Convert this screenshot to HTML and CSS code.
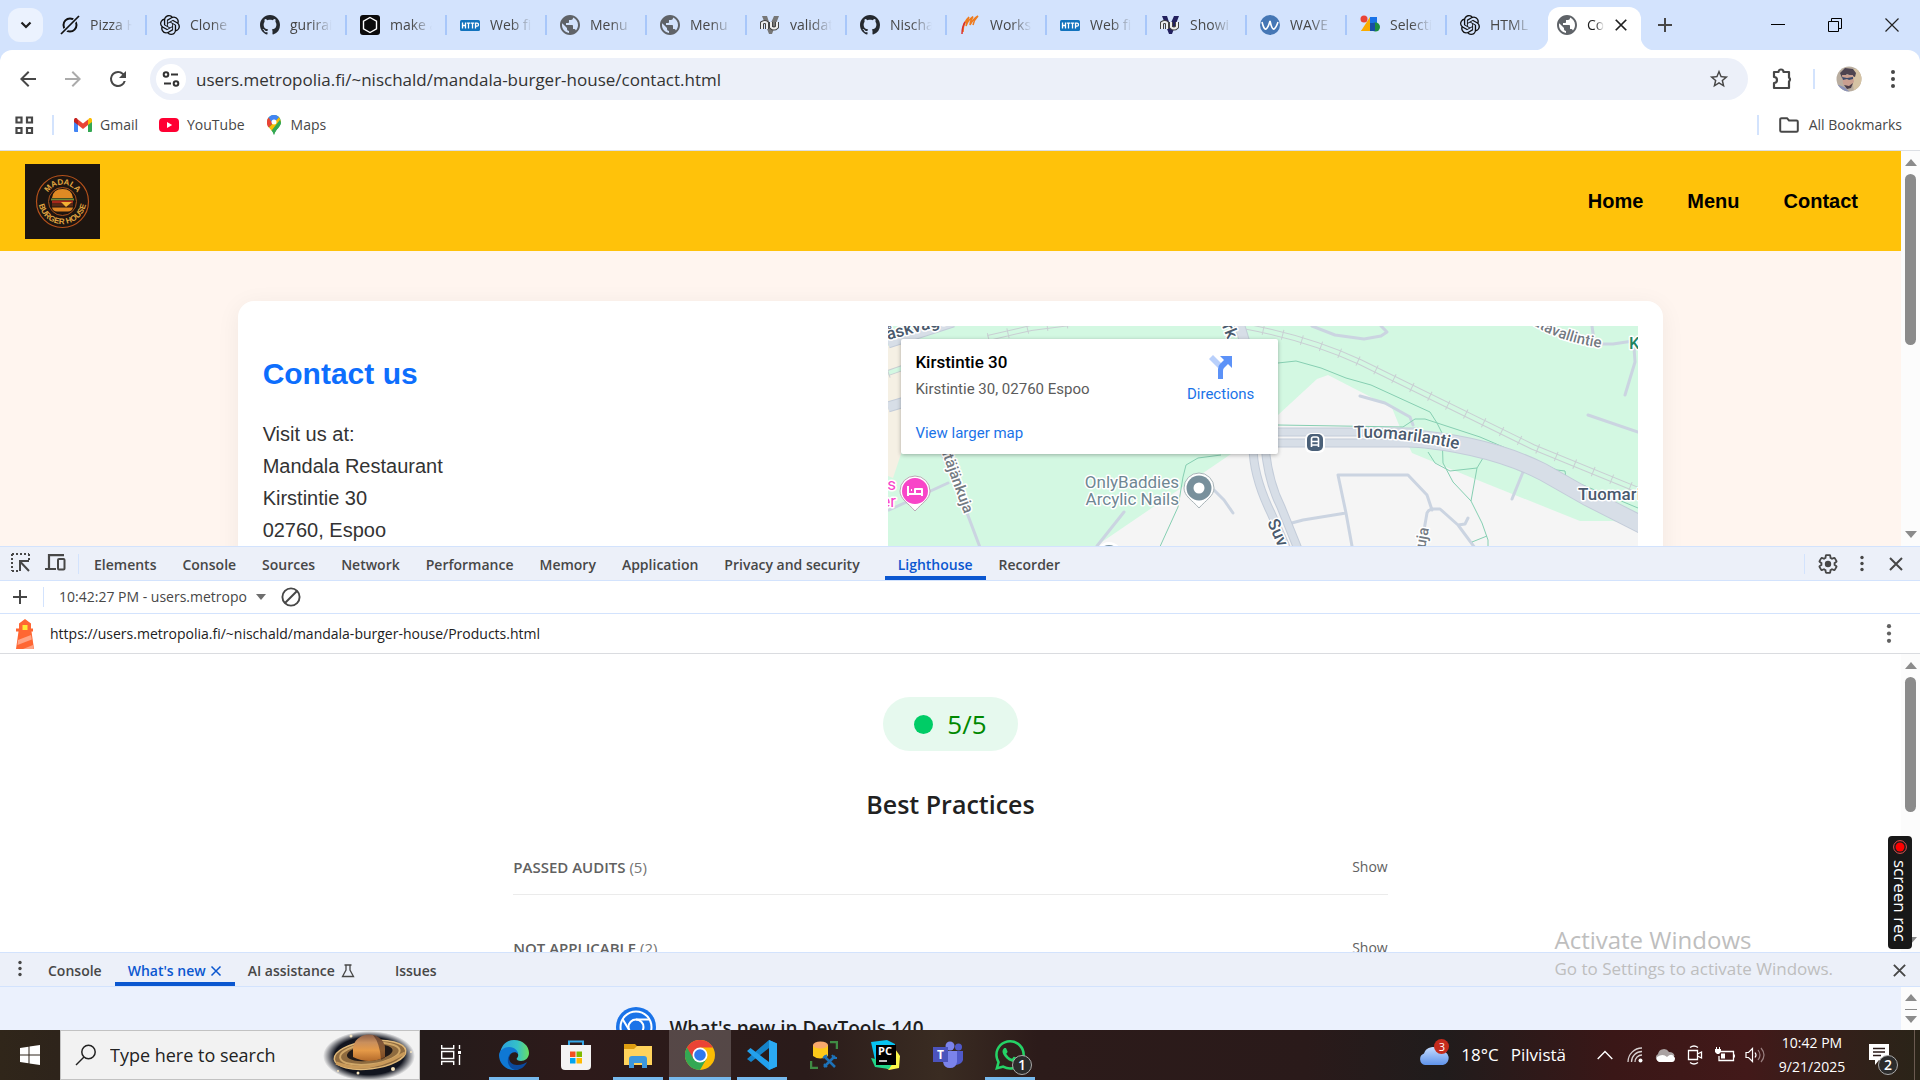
FILE: index.html
```html
<!DOCTYPE html>
<html lang="en">
<head>
<meta charset="utf-8">
<title>Contact</title>
<link rel="stylesheet" href="styles.css">
</head>
<body>
<svg class="sprite" aria-hidden="true">
  <symbol id="i-globe" viewBox="2 2 20 20"><path fill="#5f6368" d="M12 2C6.48 2 2 6.48 2 12s4.480 10 10 10 10-4.480 10-10S17.520 2 12 2zm-1 17.930c-3.950-.49-7-3.850-7-7.930 0-.62.08-1.210.21-1.790L9 15v1c0 1.100.9 2 2 2v1.930zm6.900-2.540c-.26-.81-1-1.390-1.900-1.390h-1v-3c0-.55-.45-1-1-1H8v-2h2c.55 0 1-.45 1-1V7h2c1.100 0 2-.9 2-2v-.41c2.930 1.190 5 4.060 5 7.410 0 2.080-.8 3.970-2.100 5.390z"/></symbol>
  <symbol id="i-github" viewBox="0 0 16 16"><path fill="#24292f" d="M8 0C3.58 0 0 3.58 0 8c0 3.54 2.29 6.53 5.47 7.59.4.07.55-.17.55-.38 0-.19-.01-.82-.01-1.49-2.01.37-2.53-.49-2.69-.94-.09-.23-.48-.94-.82-1.13-.28-.15-.68-.52-.01-.53.63-.01 1.08.58 1.23.82.72 1.21 1.87.87 2.33.66.07-.52.28-.87.51-1.07-1.78-.2-3.64-.89-3.64-3.95 0-.87.31-1.59.82-2.15-.08-.2-.36-1.02.08-2.12 0 0 .67-.21 2.2.82.64-.18 1.32-.27 2-.27s1.36.09 2 .27c1.53-1.04 2.2-.82 2.2-.82.44 1.1.16 1.92.08 2.12.51.56.82 1.27.82 2.15 0 3.07-1.87 3.75-3.65 3.95.29.25.54.73.54 1.48 0 1.07-.01 1.93-.01 2.2 0 .21.15.46.55.38A8.01 8.01 0 0 0 16 8c0-4.42-3.58-8-8-8z"/></symbol>
  <symbol id="i-openai" viewBox="0 0 24 24"><path fill="#111" d="M22.2819 9.8211a5.9847 5.9847 0 0 0-.5157-4.9108 6.0462 6.0462 0 0 0-6.5098-2.9A6.0651 6.0651 0 0 0 4.9807 4.1818a5.9847 5.9847 0 0 0-3.9977 2.9 6.0462 6.0462 0 0 0 .7427 7.0966 5.98 5.98 0 0 0 .511 4.9107 6.051 6.051 0 0 0 6.5146 2.9001A5.9847 5.9847 0 0 0 13.2599 24a6.0557 6.0557 0 0 0 5.7718-4.2058 5.9894 5.9894 0 0 0 3.9977-2.9001 6.0557 6.0557 0 0 0-.7475-7.0729zm-9.022 12.6081a4.4755 4.4755 0 0 1-2.8764-1.0408l.1419-.0804 4.7783-2.7582a.7948.7948 0 0 0 .3927-.6813v-6.7369l2.02 1.1686a.071.071 0 0 1 .038.052v5.5826a4.504 4.504 0 0 1-4.4945 4.4944zm-9.6607-4.1254a4.4708 4.4708 0 0 1-.5346-3.0137l.142.0852 4.783 2.7582a.7712.7712 0 0 0 .7806 0l5.8428-3.3685v2.3324a.0804.0804 0 0 1-.0332.0615L9.74 19.9502a4.4992 4.4992 0 0 1-6.1408-1.6464zM2.3408 7.8956a4.485 4.485 0 0 1 2.3655-1.9728V11.6a.7664.7664 0 0 0 .3879.6765l5.8144 3.3543-2.0201 1.1685a.0757.0757 0 0 1-.071 0l-4.8303-2.7865A4.504 4.504 0 0 1 2.3408 7.872zm16.5963 3.8558L13.1038 8.364 15.1192 7.2a.0757.0757 0 0 1 .071 0l4.8303 2.7913a4.4944 4.4944 0 0 1-.6765 8.1042v-5.6772a.79.79 0 0 0-.407-.667zm2.0107-3.0231l-.142-.0852-4.7735-2.7818a.7759.7759 0 0 0-.7854 0L9.409 9.2297V6.8974a.0662.0662 0 0 1 .0284-.0615l4.8303-2.7866a4.4992 4.4992 0 0 1 6.6802 4.66zM8.3065 12.863l-2.02-1.1638a.0804.0804 0 0 1-.038-.0567V6.0742a4.4992 4.4992 0 0 1 7.3757-3.4537l-.142.0805L8.704 5.459a.7948.7948 0 0 0-.3927.6813zm1.0976-2.3654l2.602-1.4998 2.6069 1.4998v2.9994l-2.5974 1.4997-2.6067-1.4997Z"/></symbol>
  <symbol id="i-http" viewBox="0 0 20 20"><rect y="5" width="20" height="11" rx="1.500" fill="#1173bd"/><path d="M2.500 7.500v6M5.500 7.500v6M2.500 10.500h3M6.800 8.200h3.400M8.500 8v5.500M10.800 8.200h3.400M12.500 8v5.500M15.500 13.500V8.200h1.500a1.300 1.300 0 0 1 0 3h-1.500" fill="none" stroke="#fff" stroke-width="1.300"/></symbol>
  <symbol id="i-nu" viewBox="0 0 20 20"><path d="M2 1h5l3 9 4-9h5l-7 18H9z" fill="currentColor"/><path d="M2 14V8q3-2 5 0v6M11 7v5q3 3 6 0V7" fill="none" stroke="#444" stroke-width="4"/><path d="M2 14V8q3-2 5 0v6M11 7v5q3 3 6 0V7" fill="none" stroke="#eee" stroke-width="2"/></symbol>
  <symbol id="i-close" viewBox="0 0 16 16"><path d="M2 2l12 12M14 2L2 14" stroke="currentColor" stroke-width="2" fill="none"/></symbol>
  <symbol id="i-dots" viewBox="0 0 20 20"><g fill="currentColor"><circle cx="10" cy="3" r="2"/><circle cx="10" cy="10" r="2"/><circle cx="10" cy="17" r="2"/></g></symbol>
  <symbol id="i-plus" viewBox="0 0 16 16"><path d="M8 1v14M1 8h14" stroke="currentColor" stroke-width="2"/></symbol>
</svg>

<div class="shell">
<header class="browser">
  <div class="tabstrip">
    <button class="tab-search" aria-label="Search tabs"><svg width="12" height="8" viewBox="0 0 12 8"><path d="M1.500 1.500L6 6l4.500-4.500" fill="none" stroke="#1f1f1f" stroke-width="2.200"/></svg></button>
    <div class="tabs">
      <button class="tab"><svg viewBox="0 0 20 20"><circle cx="10" cy="10" r="6.500" fill="none" stroke="#111" stroke-width="2"/><path d="M1 19Q9 12 19 1" stroke="#d3e3fd" stroke-width="4"/><path d="M1 19L19 1" stroke="#111" stroke-width="1.700"/></svg><span>Pizza H</span></button>
      <button class="tab"><svg><use href="#i-openai"/></svg><span>Clone</span></button>
      <button class="tab"><svg><use href="#i-github"/></svg><span>gurirai</span></button>
      <button class="tab"><svg viewBox="0 0 20 20"><rect width="20" height="20" rx="3" fill="#0b0b0b"/><path d="M10 2.500l6.500 3.700v7.600L10 17.500l-6.500-3.700V6.200z" fill="none" stroke="#fff" stroke-width="1.400"/></svg><span>make a</span></button>
      <button class="tab"><svg><use href="#i-http"/></svg><span>Web fi</span></button>
      <button class="tab"><svg><use href="#i-globe"/></svg><span>Menu</span></button>
      <button class="tab"><svg><use href="#i-globe"/></svg><span>Menu</span></button>
      <button class="tab"><svg class="nu-gray"><use href="#i-nu"/></svg><span>validat</span></button>
      <button class="tab"><svg><use href="#i-github"/></svg><span>Nischa</span></button>
      <button class="tab"><svg viewBox="0 0 20 20"><path d="M3 17Q3 7 9 2Q6 7 6 11Q8 5 13 1.500Q10 6 10 10Q13 4 18 1Q14 5 13 10" fill="none" stroke="#ee7a1d" stroke-width="1.500"/><path d="M2 19Q2 12 5 7" fill="none" stroke="#d93030" stroke-width="1.500"/></svg><span>Works</span></button>
      <button class="tab"><svg><use href="#i-http"/></svg><span>Web fi</span></button>
      <button class="tab"><svg class="nu-navy"><use href="#i-nu"/></svg><span>Showi</span></button>
      <button class="tab"><svg viewBox="0 0 20 20"><circle cx="10" cy="10" r="10" fill="#4577b5"/><path d="M2 7q2 8 4 7t4-8q2 9 4 8t4-7" fill="none" stroke="#fff" stroke-width="1.600"/></svg><span>WAVE</span></button>
      <button class="tab"><svg viewBox="0 0 20 20"><circle cx="4" cy="4" r="3.500" fill="#ea4335"/><path d="M8 8v8H1z" fill="#fbbc04"/><path d="M1 16L10 2v14z" fill="#f9ab00"/><path d="M10 2h7v8h-7z" fill="#1a73e8"/><circle cx="15.500" cy="12" r="4.500" fill="#1e8e3e"/><path d="M10 8h5v8h-5z" fill="#174ea6"/></svg><span>Selecti</span></button>
      <button class="tab"><svg><use href="#i-openai"/></svg><span>HTML</span></button>
      <div class="tab-active"><svg class="fav"><use href="#i-globe"/></svg><span>Co</span><button aria-label="Close tab"><svg width="14" height="14"><use href="#i-close"/></svg></button></div>
      <button class="tab-new" aria-label="New tab"><svg width="16" height="16"><use href="#i-plus"/></svg></button>
    </div>
    <div class="window-controls">
      <button aria-label="Minimize"><svg width="14" height="14" viewBox="0 0 14 14"><path d="M0 6.500h14" stroke="#000"/></svg></button>
      <button aria-label="Restore"><svg width="14" height="14" viewBox="0 0 14 14"><path d="M.5 3.500h10v10H.5zM3.500 3.500v-3h10v10h-3" fill="none" stroke="#000"/></svg></button>
      <button aria-label="Close"><svg width="14" height="14" viewBox="0 0 14 14"><path d="M.5.5l13 13M13.500.5l-13 13" stroke="#222" stroke-width="1.200"/></svg></button>
    </div>
  </div>
  <div class="toolbar">
    <button class="nav-btn" aria-label="Back"><svg width="24" height="24" viewBox="0 0 24 24"><path fill="#474747" d="M20 11H7.830l5.590-5.590L12 4l-8 8 8 8 1.410-1.410L7.830 13H20z"/></svg></button>
    <button class="nav-btn" aria-label="Forward"><svg width="24" height="24" viewBox="0 0 24 24"><path fill="#ababab" d="M4 11h12.170l-5.590-5.590L12 4l8 8-8 8-1.410-1.410L16.170 13H4z"/></svg></button>
    <button class="nav-btn" aria-label="Reload"><svg width="24" height="24" viewBox="0 0 24 24"><path fill="#474747" d="M17.650 6.350A7.958 7.958 0 0 0 12 4a8 8 0 1 0 7.730 10h-2.080A6 6 0 1 1 12 6c1.660 0 3.140.69 4.220 1.780L13 11h7V4z"/></svg></button>
    <div class="omnibox">
      <button class="site-info" aria-label="View site information"><svg width="18" height="16" viewBox="0 0 18 16"><g fill="none" stroke="#333" stroke-width="2"><circle cx="4" cy="3.500" r="2.300"/><path d="M9 3.500h7M2 12.500h7"/><circle cx="14" cy="12.500" r="2.300"/></g></svg></button>
      <input class="url" aria-label="Address" value="users.metropolia.fi/~nischald/mandala-burger-house/contact.html">
      <button class="star" aria-label="Bookmark this tab"><svg width="22" height="22" viewBox="0 0 24 24"><path fill="#474747" d="M22 9.240l-7.190-.62L12 2 9.190 8.630 2 9.240l5.460 4.730L5.820 21 12 17.270 18.180 21l-1.630-7.030L22 9.240zM12 15.400l-3.760 2.270 1-4.280-3.320-2.880 4.380-.38L12 6.100l1.710 4.040 4.380.38-3.320 2.880 1 4.280L12 15.400z"/></svg></button>
    </div>
    <button class="ext" aria-label="Extensions"><svg width="22" height="22" viewBox="0 0 22 22"><path d="M3 4h4.500a2.500 2.500 0 0 1 5 0H18v5.500a2.500 2.500 0 0 1 0 4V20H3v-5a3 3 0 0 0 0-6z" fill="none" stroke="#474747" stroke-width="2.200" stroke-linejoin="round"/></svg></button>
    <i class="vsep"></i>
    <button class="avatar" aria-label="Profile"><svg width="26" height="26" viewBox="0 0 26 26"><defs><clipPath id="av"><circle cx="13" cy="13" r="12.500"/></clipPath></defs><g clip-path="url(#av)"><rect width="26" height="26" fill="#b9ad9f"/><path d="M15 3h11v23h-8z" fill="#d5c3a4"/><path d="M4 7l5-5 8 1 3 4-1 4-8-3-5 4z" fill="#4d4450"/><path d="M6 9h11l1 7-5 6-6-4z" fill="#c99f90"/><path d="M6 11l5 1 6-1v2l-4 1-2-1-4 1z" fill="#3a4a6a"/><path d="M8 19l5 1 4-3-2 5-4 1z" fill="#4b3d48"/><path d="M0 18l8 3 6 5H0z" fill="#8b93b8"/></g></svg></button>
    <button class="more" aria-label="Menu"><svg width="20" height="20"><use href="#i-dots"/></svg></button>
  </div>
  <div class="bookmarks">
    <button class="apps" aria-label="Apps"><svg width="19" height="19" viewBox="0 0 19 19"><path d="M1.500 1.500h5v5h-5zM12 1.500h5v5h-5zM1.500 12h5v5h-5zM12 12h5v5h-5z" fill="none" stroke="#474747" stroke-width="2.200"/></svg></button>
    <i class="vsep"></i>
    <a class="bm bm-gmail" href="#"><svg width="18" height="14" viewBox="0 0 18 14"><path d="M0 2v11a1 1 0 0 0 1 1h3V6z" fill="#4285f4"/><path d="M18 2v11a1 1 0 0 1-1 1h-3V6z" fill="#34a853"/><path d="M14 1.500V7l4-3V2c0-1.800-2-2.400-3-1.500z" fill="#fbbc04"/><path d="M4 7V1.500l5 4 5-4V7l-5 4z" fill="#ea4335"/><path d="M0 2v2l4 3V1.500L3 .5C2-.4 0 .2 0 2z" fill="#c5221f"/></svg>Gmail</a>
    <a class="bm bm-yt" href="#"><svg width="20" height="14" viewBox="0 0 20 14"><rect width="20" height="14" rx="4" fill="#f03"/><path d="M8 4l5.200 3L8 10z" fill="#fff"/></svg>YouTube</a>
    <a class="bm bm-maps" href="#"><svg width="14" height="20" viewBox="0 0 14 20"><path d="M7 0a7 7 0 0 1 7 7c0 5-5.500 7-7 13C5.500 14 0 12 0 7a7 7 0 0 1 7-7z" fill="#34a853"/><path d="M1.500 2.600L7 7l-5.500 5.500A8 8 0 0 1 0 7c0-1.700.6-3.200 1.500-4.400z" fill="#ea4335"/><path d="M2 12.500L12 1.900 14 7 5 16z" fill="#fbbc04"/><path d="M1.600 2.500A7 7 0 0 1 12 2L6 9z" fill="#4285f4"/><path d="M14 7c0 5-5.500 7-7 13-.4-1.800-1.300-3.200-2.400-4.500L12.800 5z" fill="#34a853"/><circle cx="7" cy="7" r="2.500" fill="#fff"/></svg>Maps</a>
    <span class="grow"></span>
    <i class="vsep"></i>
    <a class="bm bm-all" href="#"><svg width="20" height="16" viewBox="0 0 20 16"><path d="M1.200 2.500a1.300 1.300 0 0 1 1.300-1.300H8l2 2.300h7.500a1.300 1.300 0 0 1 1.300 1.300v8.700a1.300 1.300 0 0 1-1.300 1.300h-15a1.300 1.300 0 0 1-1.300-1.300z" fill="none" stroke="#474747" stroke-width="2"/></svg>All Bookmarks</a>
  </div>
</header>

<section class="viewport">
  <div class="page">
    <nav class="site-nav">
      <a class="logo" href="#" aria-label="Madala Burger House"><svg viewBox="0 0 75 75"><defs><path id="arc-top" d="M20.500 37.500a17 17 0 0 1 34 0"/><path id="arc-bottom" d="M13.500 36a24 24 0 0 0 48 0"/></defs><rect width="75" height="75" fill="#1d1510"/><circle cx="37.500" cy="37.500" r="26" fill="none" stroke="#b6521b" stroke-width="1.200"/><circle cx="37.500" cy="37.500" r="14" fill="none" stroke="#a8501c" stroke-width="1"/><text class="logo-text" text-anchor="middle"><textPath href="#arc-top" startOffset="50%">MADALA</textPath></text><text class="logo-text" text-anchor="middle"><textPath href="#arc-bottom" startOffset="50%">BURGER HOUSE</textPath></text><path d="M27 34q1-9 10.500-9T48 34z" fill="#e08a24"/><path d="M26 34.500h23v2H26z" fill="#6f8a34"/><path d="M27 36.500h21v3H27z" fill="#a5271b"/><path d="M27 39.500h21v3H27z" fill="#5a2a14"/><path d="M36 38h11l-6 5z" fill="#f2b135"/><path d="M27 43.500h21q-1 4-5 4H32q-4 0-5-4z" fill="#de8422"/></svg></a>
      <div class="site-links"><a href="#">Home</a><a href="#">Menu</a><a href="#">Contact</a></div>
    </nav>
    <main class="contact-card">
      <div class="contact-text">
        <h1>Contact us</h1>
        <p>Visit us at:<br>Mandala Restaurant<br>Kirstintie 30<br>02760, Espoo</p>
      </div>
      <div class="map">
        <svg class="map-art" viewBox="0 0 750 450" preserveAspectRatio="xMidYMin slice">
          <defs>
            <path id="p-tuo" d="M466 112Q520 110 585 127"/>
            <path id="p-tuo2" d="M690 174h120"/>
            <path id="p-vall" d="M630 -12Q665 18 730 24"/>
          </defs>
          <rect width="750" height="450" fill="#d3f8e2"/>
          <path d="M0 20L13 14V128L5 152L0 150z" fill="#f5f0e4"/>
          <path d="M343 128L390 89L429 53L440 49L504 82L511 99L524 127L582 151L692 195H725L750 200V450H0V420L208 220z" fill="#f5f5f5"/>
          <g class="rail-line"><path d="M100 12L143 2L190 -4M0 47L20 40M355 0Q420 12 472 36L645 121L750 164"/></g>
          <g class="rail-gap"><path d="M100 12L143 2L190 -4M0 47L20 40M355 0Q420 12 472 36L645 121L750 164"/></g>
          <g class="rail-tick"><path d="M100 12L143 2L190 -4M0 47L20 40M355 0Q420 12 472 36L645 121L750 164"/></g>
          <g class="minor">
            <path d="M464 220L458 187L450 149H520L539 169L544 184M400 198L415 194L458 187M535 210L539 187Q541 183 545 183H552L570 199L590 226M570 199L577 198L580 192M635 146L624 173M700 89L750 106M704 0L706 14M712 18H725L745 15M746 21L747 36L737 69M424 0L447 9L476 13L493 10L499 6L493 0M472 70L497 77L522 91L525 99M326 164L336 174L345 187M236 186L209 220M54 128L79 187L93 224M1 184L60 157"/>
          </g>
          <g class="trail">
            <path d="M390 37L408 35L433 42L458 52L483 59L542 86L549 97L554 107L555 137L565 156L583 175L594 197L600 214V230M390 99L515 101L527 93H537L592 111L669 144L677 145L678 152L750 182M540 126L547 137L562 145L589 142L595 132M589 142L583 175M584 216L599 210M333 129L310 132L298 139L295 151L290 181L270 225"/>
          </g>
          <g class="road-edge"><path d="M0 17L65 -4M0 81L20 75" stroke-width="11"/><path d="M380 106H530" stroke-width="9"/><path d="M380 117H530" stroke-width="9"/><path d="M520 112Q600 118 655 146L699 171L760 202" stroke-width="18"/><path d="M350 -6L358 20" stroke-width="11"/><path d="M365 120Q365 150 383 187L401 228M377 120Q380 155 393 181L412 228" stroke-width="9"/></g>
          <g class="road"><path d="M0 17L65 -4M0 81L20 75" stroke-width="9"/><path d="M380 106H530" stroke-width="7"/><path d="M380 117H530" stroke-width="7"/><path d="M520 112Q600 118 655 146L699 171L760 202" stroke-width="16"/><path d="M350 -6L358 20" stroke-width="9"/><path d="M365 120Q365 150 383 187L401 228M377 120Q380 155 393 181L412 228" stroke-width="7"/></g>
          <g class="label-major">
            <text><textPath href="#p-tuo">Tuomarilantie</textPath></text>
            <text><textPath href="#p-tuo2">Tuomarilantie</textPath></text>
            <text transform="translate(379 196) rotate(66)">Suvelantie</text>
            <text transform="translate(0 14) rotate(-15)">åskvägen</text>
            <text transform="translate(334 0) rotate(68)">rk</text>
          </g>
          <g class="label-minor">
            <text><textPath href="#p-vall" startOffset="8">Ratavallintie</textPath></text>
            <text transform="translate(54 127) rotate(70)">itäjänkuja</text>
            <text transform="translate(536 230) rotate(-80)">kuja</text>
          </g>
          <text class="label-green" x="741" y="23">K</text>
          <g class="label-poi"><text x="291" y="162" text-anchor="end">OnlyBaddies</text><text x="291" y="179" text-anchor="end">Arcylic Nails</text></g>
          <g class="label-hotel"><text x="8" y="164" text-anchor="end">s</text><text x="8" y="181" text-anchor="end">er</text></g>
          <path d="M296 162a15 15 0 1 1 30 0c0 8-8 12-15 20c-7-8-15-12-15-20z" fill="#fff" stroke="#a9b4b8"/><circle cx="311" cy="162" r="12.500" fill="#78909c"/><circle cx="311" cy="162" r="5.500" fill="#fff"/>
          <path d="M12 165a15 15 0 1 1 30 0c0 8-8 12-15 20c-7-8-15-12-15-20z" fill="#fff" stroke="#b9a9b4"/><circle cx="27" cy="165" r="13" fill="#f845c8"/><path d="M20 160v10M20 168h14v2M34 168v-5h-7v4M23 164h1" fill="none" stroke="#fff" stroke-width="2"/>
          <circle cx="221" cy="229" r="13" fill="#fff"/><circle cx="221" cy="230" r="11" fill="#78909c"/>
          <rect x="417" y="107" width="20" height="20" rx="6" fill="#fff"/><rect x="419" y="108" width="16" height="17" rx="5" fill="#4a6078"/><path d="M423.500 121v-8q0-2 2-2h3q2 0 2 2v8M424 115.500h6M424 119h6" fill="none" stroke="#fff" stroke-width="1.600"/>
        </svg>
        <div class="place">
          <div class="place-info"><strong>Kirstintie 30</strong><span>Kirstintie 30, 02760 Espoo</span><a href="#">View larger map</a></div>
          <a class="place-dir" href="#"><svg width="24" height="24" viewBox="0 0 24 24"><path d="M0 4l4-4 9 9-4 4z" fill="#b9d0fb"/><path d="M9 24V14q0-3 2-5l4-4-4-4h12v12l-4-4-4 4q-1 1-1 3v8z" fill="#5c92f8"/></svg>Directions</a>
        </div>
      </div>
    </main>
  </div>
  <div class="scrollbar"><i class="up"></i><i class="thumb thumb-page"></i><i class="down"></i></div>
</section>

<section class="devtools">
  <div class="dt-tabs">
    <button class="dt-inspect" aria-label="Inspect"><svg width="19" height="19" viewBox="0 0 19 19"><path d="M1 1h17M1 1v17M18 1v6M1 18h6" stroke="#474747" stroke-width="2" stroke-dasharray="2 2" fill="none"/><path d="M8 8h10M9 8v10M9.500 9l8.500 9" fill="none" stroke="#474747" stroke-width="2"/></svg></button>
    <button class="dt-device" aria-label="Toggle device toolbar"><svg width="21" height="17" viewBox="0 0 21 17"><path d="M4 14V1.200h15M0 15h11" fill="none" stroke="#474747" stroke-width="2.200"/><rect x="13" y="5" width="6.500" height="10.500" rx="1" fill="none" stroke="#474747" stroke-width="2"/></svg></button>
    <i class="vsep thin"></i>
    <button>Elements</button><button>Console</button><button>Sources</button><button>Network</button><button>Performance</button><button>Memory</button><button>Application</button><button>Privacy and security</button><button class="on lighthouse">Lighthouse</button><button>Recorder</button>
    <span class="grow"></span>
    <i class="vsep thin"></i>
    <button class="ico" aria-label="Settings"><svg width="22" height="22" viewBox="0 0 24 24"><path fill="none" stroke="#474747" stroke-width="2" d="M19.140 12.940c.04-.3.06-.61.06-.94 0-.32-.02-.64-.07-.94l2.030-1.580a.49.49 0 0 0 .12-.61l-1.920-3.320a.49.49 0 0 0-.59-.22l-2.390.96a7.030 7.030 0 0 0-1.620-.94l-.36-2.540a.48.48 0 0 0-.48-.41h-3.840a.48.48 0 0 0-.47.41l-.36 2.540c-.59.24-1.130.57-1.620.94l-2.390-.96a.48.48 0 0 0-.59.22L2.740 8.870a.48.48 0 0 0 .12.61l2.030 1.580c-.05.3-.09.63-.09.94s.02.64.07.94l-2.030 1.580a.49.49 0 0 0-.12.61l1.920 3.320c.12.22.37.29.59.22l2.390-.96c.5.38 1.030.7 1.620.94l.36 2.540c.05.24.24.41.48.41h3.840c.24 0 .44-.17.47-.41l.36-2.540c.59-.24 1.130-.56 1.620-.94l2.390.96c.22.08.47 0 .59-.22l1.920-3.320a.48.48 0 0 0-.12-.61l-2.010-1.580z"/><circle cx="12" cy="12" r="3.500" fill="#474747"/></svg></button>
    <button class="ico" aria-label="More options"><svg width="20" height="17"><use href="#i-dots"/></svg></button>
    <button class="ico" aria-label="Close DevTools"><svg width="16" height="16"><use href="#i-close"/></svg></button>
  </div>
  <div class="lh-bar">
    <button aria-label="New report"><svg width="16" height="16"><use href="#i-plus"/></svg></button>
    <i class="vsep thin"></i>
    <select aria-label="Reports"><option>10:42:27 PM - users.metropo</option></select>
    <svg class="caret" width="10" height="6" viewBox="0 0 10 6"><path d="M0 0h10L5 6z" fill="#6e6e6e"/></svg>
    <button aria-label="Clear all"><svg width="20" height="20" viewBox="0 0 20 20"><circle cx="10" cy="10" r="8.600" fill="none" stroke="#474747" stroke-width="1.900"/><path d="M4 16L16 4" stroke="#474747" stroke-width="1.900"/></svg></button>
  </div>
  <div class="lh-url">
    <svg width="20" height="30" viewBox="0 0 20 30"><path d="M10 0l6 4.500v5h2v3h-1.500L19 30H1l2.500-17.500H1v-3h3v-5z" fill="#f63"/><path d="M7.500 6h5v5h-5z" fill="#ffe838"/><path d="M3 21l13-5 .8 4.500L2.500 26zM8 30l10-4 .8 4z" fill="#ffa385"/></svg>
    <span>https://users.metropolia.fi/~nischald/mandala-burger-house/Products.html</span>
    <button aria-label="Report options"><svg width="22" height="21"><use href="#i-dots"/></svg></button>
  </div>
  <div class="lh-body">
    <div class="report">
      <div class="gauge"><i></i>5/5</div>
      <h2>Best Practices</h2>
      <div class="clump"><span><b>PASSED AUDITS</b> (5)</span><button>Show</button></div>
      <div class="clump"><span><b>NOT APPLICABLE</b> (2)</span><button>Show</button></div>
    </div>
    <div class="scrollbar"><i class="up"></i><i class="thumb thumb-lh"></i><i class="down"></i></div>
  </div>
  <div class="dt-tabs drawer">
    <button class="drawer-more" aria-label="More tools"><svg width="20" height="17"><use href="#i-dots"/></svg></button>
    <button>Console</button>
    <button class="on">What's new <svg width="12" height="12"><use href="#i-close"/></svg></button>
    <button class="ai">AI assistance <svg width="14" height="14" viewBox="0 0 14 14"><path d="M3.500 1h7M5 1v5L1.500 12.500h11L9 6V1" fill="none" stroke="#474747" stroke-width="1.300"/></svg></button>
    <button class="issues">Issues</button>
    <span class="grow"></span>
    <button class="drawer-close" aria-label="Close drawer"><svg width="15" height="15"><use href="#i-close"/></svg></button>
  </div>
  <div class="drawer-body">
    <div class="whats-new"><svg width="40" height="40" viewBox="0 0 40 40"><circle cx="20" cy="20" r="20" fill="#1a73e8"/><g fill="none" stroke="#fff" stroke-width="2"><circle cx="20" cy="20" r="15.500"/><circle cx="20" cy="20" r="7.500"/><path d="M20 12.500h14M13.500 23.500L6.500 12M26.500 23.500L19 35"/></g></svg><span>What's new in DevTools 140</span></div>
    <div class="scrollbar mini"><i class="up"></i><i class="bar"></i><i class="down"></i></div>
  </div>
</section>

<footer class="taskbar">
  <button class="start" aria-label="Start"><svg width="20" height="20" viewBox="0 0 20 20"><path d="M0 3l8.500-1.200v7.700H0zM9.500 1.600L20 0v9.500H9.500zM0 10.500h8.500v7.700L0 17zM9.500 10.500H20V20L9.500 18.400z" fill="#fff"/></svg></button>
  <div class="search">
    <svg width="22" height="22" viewBox="0 0 22 22"><circle cx="13.500" cy="8" r="6.700" fill="none" stroke="#222" stroke-width="1.500"/><path d="M9 13L1 21" stroke="#222" stroke-width="1.500"/></svg>
    <input aria-label="Search" placeholder="Type here to search">
    <svg class="saturn" width="92" height="48" viewBox="0 0 92 48"><defs><radialGradient id="sky"><stop offset=".75" stop-color="#12151f"/><stop offset="1" stop-color="#12151f" stop-opacity="0"/></radialGradient><linearGradient id="pl" x2="0" y2="1"><stop offset="0" stop-color="#8d5f48"/><stop offset=".3" stop-color="#c98f5c"/><stop offset=".6" stop-color="#e59a48"/><stop offset="1" stop-color="#b46a2b"/></linearGradient></defs><ellipse cx="46" cy="25" rx="46" ry="25" fill="url(#sky)"/><g transform="rotate(-7 46 24)"><ellipse cx="47" cy="24" rx="36" ry="14" fill="#8f6b3f" stroke="#e0b878" stroke-width="1.500"/><ellipse cx="47" cy="23" rx="30" ry="10.500" fill="none" stroke="#d0a768" stroke-width="2"/><ellipse cx="47" cy="22" rx="23" ry="8" fill="#221a18"/></g><path d="M30 26V18a15.500 14 0 0 1 32 0v8q-16 8-32 0z" fill="url(#pl)"/><path d="M50 4q12 3 12 15v8l-4 2q-1-17-8-25z" fill="#3a1f18" opacity=".5"/><path d="M13 32Q45 44 82 22" fill="none" stroke="#c99a5a" stroke-width="3"/><g fill="#f7e6c0"><circle cx="28" cy="5" r="1.500"/><circle cx="70" cy="38" r="2"/><circle cx="35" cy="42" r="1.500"/><circle cx="15" cy="40" r="1"/><circle cx="88" cy="21" r="1"/></g></svg>
  </div>
  <div class="apps-row">
    <button aria-label="Task View"><svg width="20" height="20" viewBox="0 0 20 20"><path d="M.7 0v3.500h12V0M.7 20v-3.500h12V20M.7 6.500h12v7H.7zM18.500 0v4M18.500 10v10" fill="none" stroke="#fff" stroke-width="1.400"/><path d="M17 6h3v3h-3z" fill="#fff"/></svg></button>
    <button class="run" aria-label="Edge"><svg width="30" height="30" viewBox="0 0 30 30"><defs><linearGradient id="e1" x1="0" x2="1"><stop stop-color="#2a9fe0"/><stop offset=".6" stop-color="#35c1c8"/><stop offset="1" stop-color="#6adf63"/></linearGradient></defs><path d="M1 14C2 5 8 0 15 0c9 0 15 6 15 13 0 5-4 8-8 8-4 0-5-2-4-3 2-2 2-7-4-8-5 0-10 1-13 4z" fill="url(#e1)"/><path d="M0 15c0-5 6-8 10-8 6 0 9 4 9 7-2-3-8-2-9 3-1 6 4 12 10 12-10 4-20-4-20-14z" fill="#0f78d4"/><path d="M12 13c-4 6-1 12 6 12 5 0 8-2 10-3-2 5-7 8-12 8-7-2-10-11-4-17z" fill="#0b4a9e"/></svg></button>
    <button aria-label="Microsoft Store"><svg width="30" height="30" viewBox="0 0 30 30"><path d="M8 6V1.500h14V6" fill="none" stroke="#35a8e8" stroke-width="2"/><path d="M0 5h30v21a4 4 0 0 1-4 4H4a4 4 0 0 1-4-4z" fill="#f3f3f3"/><path d="M9 11.500h5.500V17H9z" fill="#f25022"/><path d="M15.500 11.500H21V17h-5.500z" fill="#7fba00"/><path d="M9 18h5.500v5.500H9z" fill="#00a4ef"/><path d="M15.500 18H21v5.500h-5.500z" fill="#ffb900"/></svg></button>
    <button class="run" aria-label="File Explorer"><svg width="28" height="26" viewBox="0 0 28 26"><path d="M0 2h11l3 3h14v6H0z" fill="#dd9d11"/><path d="M0 7h10l3-3h15v19H0z" fill="#ffd35c"/><path d="M5 26V17q0-3 3-3h12q3 0 3 3v9h-5v-5h-8v5z" fill="#3c97dd"/></svg></button>
    <button class="run focus" aria-label="Chrome"><svg width="30" height="30" viewBox="0 0 30 30"><circle cx="15" cy="15" r="15" fill="#fbbc04"/><path d="M2 7.500A15 15 0 0 0 15 30l6.500-11.300z" fill="#34a853"/><path d="M2 7.500A15 15 0 0 1 28 7.500H15L8.500 18.700z" fill="#ea4335"/><circle cx="15" cy="15" r="7.500" fill="#fff"/><circle cx="15" cy="15" r="5.800" fill="#3078ec"/></svg></button>
    <button class="run" aria-label="Visual Studio Code"><svg width="30" height="30" viewBox="0 0 30 30"><path d="M22 0l8 3.500v23L22 30V8L4 22l-4-3z" fill="#1583c9"/><path d="M22 0v30L0 11l3.500-3L22 22z" fill="#23a0ec"/><path d="M22 0l8 3.500v23L22 30z" fill="#2baaf3"/></svg></button>
    <button aria-label="SQL tools"><svg width="28" height="28" viewBox="0 0 28 28"><path d="M20 1h7v7M8 27H1v-7" fill="none" stroke="#3f8a43" stroke-width="2.500"/><path d="M3 4v11q7 5 15 0V4z" fill="#fcc81a"/><ellipse cx="10.500" cy="4" rx="7.500" ry="3.500" fill="#f8a86c"/><path d="M14 26l11-11M14 15l11 11" stroke="#1d72b8" stroke-width="2.500"/><path d="M13 17l4-3M22 14l2 3h3M14 23l3 3" stroke="#1d72b8" stroke-width="2" fill="none"/></svg></button>
    <button aria-label="PyCharm"><svg width="30" height="30" viewBox="0 0 30 30"><path d="M0 2l16-2 8 4v10L4 20z" fill="#07c3f2"/><path d="M22 6l7 10-1 12-10 2-8-6z" fill="#fcf84a"/><path d="M0 18l4 9 14 2 4-6z" fill="#21d789"/><path d="M5 5h20v20H5z" fill="#000"/><path d="M8 21h8" stroke="#fff" stroke-width="1.500"/><text x="7" y="15" class="pc">PC</text></svg></button>
    <button aria-label="Teams"><svg width="30" height="28" viewBox="0 0 30 28"><circle cx="17" cy="5" r="4.500" fill="#7b83eb"/><circle cx="25.500" cy="6" r="3.500" fill="#5059c9"/><path d="M20 10h10v9q-1 4-7 5z" fill="#5059c9"/><path d="M10 10h14v11q-1 6-7 6t-7-6z" fill="#7b83eb"/><path d="M0 6h15v15H0z" fill="#4b53bc"/><text x="4" y="18" class="tm">T</text></svg></button>
    <button class="run wa" aria-label="WhatsApp"><svg width="30" height="30" viewBox="0 0 24 24"><path fill="#25d366" d="M17.472 14.382c-.297-.149-1.758-.867-2.03-.967-.273-.099-.471-.148-.67.15-.197.297-.767.966-.94 1.164-.173.199-.347.223-.644.075-.297-.15-1.255-.463-2.39-1.475-.883-.788-1.48-1.761-1.653-2.059-.173-.297-.018-.458.13-.606.134-.133.298-.347.446-.52.149-.174.198-.298.298-.497.099-.198.05-.371-.025-.52-.075-.149-.669-1.612-.916-2.207-.242-.579-.487-.5-.669-.51-.173-.008-.371-.01-.57-.01-.198 0-.52.074-.792.372-.272.297-1.04 1.016-1.04 2.479 0 1.462 1.065 2.875 1.213 3.074.149.198 2.096 3.2 5.077 4.487.709.306 1.262.489 1.694.625.712.227 1.36.195 1.871.118.571-.085 1.758-.719 2.006-1.413.248-.694.248-1.289.173-1.413-.074-.124-.272-.198-.57-.347m-5.421 7.403h-.004a9.87 9.87 0 01-5.031-1.378l-.361-.214-3.741.982.998-3.648-.235-.374a9.86 9.86 0 01-1.51-5.26c.001-5.45 4.436-9.884 9.888-9.884 2.64 0 5.122 1.03 6.988 2.898a9.825 9.825 0 012.893 6.994c-.003 5.45-4.437 9.884-9.885 9.884m8.413-18.297A11.815 11.815 0 0012.05 0C5.495 0 .16 5.335.157 11.892c0 2.096.547 4.142 1.588 5.945L.057 24l6.305-1.654a11.882 11.882 0 005.683 1.448h.005c6.554 0 11.89-5.335 11.893-11.893a11.821 11.821 0 00-3.48-8.413z"/></svg><span class="badge">1</span></button>
  </div>
  <button class="weather"><span class="w-icon"><svg width="30" height="20" viewBox="0 0 30 20"><defs><linearGradient id="cl" x2="0" y2="1"><stop stop-color="#c4dcff"/><stop offset="1" stop-color="#5f93ea"/></linearGradient></defs><path d="M6 20a6 6 0 0 1-1-11.500A9 9 0 0 1 21 6a7 7 0 0 1 3 14z" fill="url(#cl)"/></svg><span class="w-badge">3</span></span><span>18°C</span><span>Pilvistä</span></button>
  <div class="tray">
    <button aria-label="Show hidden icons"><svg width="16" height="10" viewBox="0 0 16 10"><path d="M.7 9L8 1.500 15.300 9" fill="none" stroke="#fff" stroke-width="1.400"/></svg></button>
    <button aria-label="Network"><svg width="16" height="16" viewBox="0 0 16 16"><path d="M1 15A14 14 0 0 1 15 1M4.500 15A10.500 10.500 0 0 1 15 4.500M8 15a7 7 0 0 1 7-7" fill="none" stroke="#d8d0d0" stroke-width="1.300"/><circle cx="13.500" cy="13.500" r="2" fill="#fff"/></svg></button>
    <button aria-label="OneDrive"><svg width="20" height="14" viewBox="0 0 20 14"><path d="M4 13.500A4 4 0 0 1 3 6a6 6 0 0 1 11-2q5 0 5.500 4z" fill="#aaa2a2"/><path d="M4 14a4 4 0 0 1-2-5q6-4 10 0 5-5 8 1 0 4-3 4z" fill="#fff"/></svg></button>
    <button aria-label="Meet Now"><svg width="16" height="20" viewBox="0 0 16 20"><path d="M1.500 5.500h9v9h-9zM10.500 9l4-2v6l-4-2M3 2.500q4-3 8 0M3 17.500q4 3 8 0" fill="none" stroke="#fff" stroke-width="1.300"/></svg></button>
    <button aria-label="Battery"><svg width="20" height="16" viewBox="0 0 20 16"><path d="M6 4.500h12.500v9H4V9M19.300 7.500v3" fill="none" stroke="#fff" stroke-width="1.300"/><path d="M6 6.500h4v5H6zM0 2h6v3L4 7H2L0 5z" fill="#fff"/><path d="M1.500 0v3M4.500 0v3" stroke="#fff"/></svg></button>
    <button aria-label="Volume"><svg width="20" height="16" viewBox="0 0 20 16"><path d="M1 5.500h2.500l4-4v13l-4-4H1zM10 5.500q2 2.500 0 5" fill="none" stroke="#fff" stroke-width="1.200"/><path d="M13 3q4 5 0 10M16 1q6 7 0 14" fill="none" stroke="#9a8080" stroke-width="1.200"/></svg></button>
    <button class="clock">10:42 PM<br>9/21/2025</button>
    <button class="notif" aria-label="Notifications"><svg width="20" height="22" viewBox="0 0 20 22"><path d="M0 0h20v16H10l-4 5v-5H0z" fill="#fff"/><path d="M4 4.500h12M4 8h12M4 11.500h8" stroke="#2a1a18" stroke-width="1.300"/></svg><span class="badge">2</span></button>
    <i class="peek"></i>
  </div>
</footer>
</div>

<div class="watermark"><p>Activate Windows</p><p>Go to Settings to activate Windows.</p></div>
<div class="recorder"><svg width="14" height="14" viewBox="0 0 14 14"><circle cx="7" cy="7" r="6.400" fill="none" stroke="#e05050"/><circle cx="7" cy="7" r="4.500" fill="#f00"/></svg><span>screen rec</span></div>
</body>
</html>
```
FILE: styles.css
```css
* { box-sizing: border-box; }
body {
  margin: 0;
  font: 14px/20px "Open Sans", "Noto Sans", sans-serif;
  color: #474747;
}
button, input, select { font: inherit; color: inherit; border: 0; background: none; padding: 0; margin: 0; outline: 0; }
button { display: flex; align-items: center; justify-content: center; }
svg { display: block; flex: none; }
a { text-decoration: none; color: inherit; }
i { display: block; flex: none; }
.sprite { position: absolute; width: 0; height: 0; }
.grow { flex: 1; }
.shell {
  height: 100vh;
  display: grid;
  grid-template-rows: auto minmax(0, 395fr) minmax(0, 484fr) auto;
}

/* browser chrome */
.browser { background: #d3e3fd; border-bottom: 1px solid #dcdfe4; }
.tabstrip { display: flex; height: 50px; padding-left: 8px; }
.tab-search { width: 35px; height: 34px; margin: 8px 3px 0 0; border-radius: 12px; background: #ebf2fe; flex: none; }
.tabs { display: flex; flex: 1; min-width: 0; }
.tab { position: relative; flex: 0 1 100px; min-width: 0; gap: 10px; padding: 0 14px; justify-content: flex-start; }
.tab svg, .fav { width: 20px; height: 20px; }
.tab span, .tab-active span {
  flex: 1; min-width: 0; overflow: hidden; white-space: nowrap; text-align: left;
  mask-image: linear-gradient(90deg, #000 50%, transparent);
}
.tab::after { content: ""; position: absolute; right: -1px; top: 15px; width: 2px; height: 20px; background: #a8c7fa; }
.tab:nth-child(15)::after { display: none; }
.nu-gray { color: #777; }
.nu-navy { color: #23215f; }
.tab-active {
  position: relative; display: flex; align-items: center; gap: 10px;
  flex: 0 0 89px; margin: 7px 0 0 2px; padding: 0 13px 7px 9px;
  background: #fff; border-radius: 12px 12px 0 0; color: #1f1f1f;
}
.tab-active::before, .tab-active::after { content: ""; position: absolute; bottom: 0; width: 14px; height: 14px; }
.tab-active::before { left: -14px; background: radial-gradient(circle at 0 0, transparent 14px, #fff 15px); }
.tab-active::after { right: -14px; background: radial-gradient(circle at 100% 0, transparent 14px, #fff 15px); }
.tab-new { width: 48px; }
.window-controls { display: flex; }
.window-controls button { width: 57px; }
.toolbar { display: flex; align-items: center; height: 58px; background: #fff; border-radius: 12px 12px 0 0; padding-left: 5px; }
.nav-btn { width: 45px; height: 40px; flex: none; }
.omnibox { flex: 1; height: 42px; margin-left: 10px; padding: 0 18px 0 6px; display: flex; align-items: center; background: #ecf0f9; border-radius: 21px; }
.site-info { width: 30px; height: 30px; border-radius: 15px; background: #fff; }
.url { flex: 1; min-width: 0; margin-left: 10px; font-size: 17px; color: #333; height: 30px; }
.ext { width: 36px; margin: 0 13px 0 16px; }
.vsep { width: 2px; height: 20px; background: #d3e3fd; }
.vsep.thin { width: 1px; }
.avatar { width: 68px; }
.more { width: 20px; margin-right: 17px; }
.bookmarks { display: flex; align-items: center; height: 42px; padding: 0 18px 8px 15px; background: #fff; }
.apps + .vsep { margin: 0 20px 0 18px; }
.bm { display: flex; align-items: center; gap: 8px; }
.bm-yt { margin-left: 21px; }
.bm-maps { margin-left: 22px; gap: 10px; }
.bm-all { margin-left: 20px; gap: 10px; }

/* scrollbars */
.scrollbar { width: 19px; flex: none; background: #fcfcfc; display: flex; flex-direction: column; align-items: center; padding: 8px 0; }
.up, .down { border: 6px solid transparent; border-top-width: 0; border-bottom: 7px solid #8b8b8b; }
.down { border-bottom-width: 0; border-top: 7px solid #8b8b8b; margin-top: auto; }
.thumb { width: 11px; margin-top: 8px; border-radius: 6px; background: #8b8b8b; }
.thumb-page { height: 45%; }
.thumb-lh { height: 48%; }

/* restaurant site */
.viewport { display: flex; overflow: hidden; background: #fff5ef; }
.page { flex: 1; min-width: 0; height: 100%; overflow: hidden; font-family: Arial, "Liberation Sans", sans-serif; }
.site-nav { height: 100px; display: flex; align-items: center; justify-content: space-between; background: #ffc20a; padding: 0 43px 0 25px; }
.logo svg { width: 75px; height: 75px; }
.logo-text { font: bold 8px "Liberation Sans", sans-serif; fill: #e0a540; }
.site-links { display: flex; gap: 44px; font-size: 20px; font-weight: bold; color: #000; }
.contact-card { display: flex; justify-content: space-between; gap: 25px; width: 75%; margin: 50px auto; padding: 25px; border-radius: 16px; background: #fff; box-shadow: 0 4px 25px rgba(0, 0, 0, .06); }
.contact-text h1 { margin: 28px 0 24px; font-size: 30px; line-height: 40px; color: #0d6efd; }
.contact-text p { margin: 0; font-size: 20px; line-height: 32px; color: #333; }
.map { position: relative; flex: 0 1 750px; height: 450px; }
.map-art { width: 100%; height: 100%; overflow: hidden; font-family: Roboto, sans-serif; }
.map-art path { stroke-linejoin: round; }
.rail-line path { fill: none; stroke: #c9cfd3; stroke-width: 6; }
.rail-gap path { fill: none; stroke: #d3f8e2; stroke-width: 4; }
.rail-tick path { fill: none; stroke: #c9cfd3; stroke-width: 10; stroke-dasharray: 1 19; }
.minor path { fill: none; stroke: #cbd4e1; stroke-width: 3; stroke-linecap: round; }
.trail path { fill: none; stroke: #86cfb2; stroke-width: 1; }
.road-edge path { fill: none; stroke: #c3ccd9; }
.road path { fill: none; stroke: #d7dee7; }
.map-art text { paint-order: stroke; stroke: #fff; stroke-width: 3px; stroke-linejoin: round; }
.label-major { font-size: 17px; font-weight: 500; fill: #4a5a6d; }
.label-minor { font-size: 15px; fill: #737a82; font-weight: 500; }
.label-green { font-size: 17px; font-weight: 500; fill: #1f8463; }
.label-poi { font-size: 17px; fill: #6f8793; }
.label-hotel { font-size: 17px; fill: #f845c8; }
.place { position: absolute; left: 13px; top: 13px; width: 377px; height: 115px; padding: 13px 24px 0 14px; display: flex; justify-content: space-between; background: #fff; border-radius: 2px; box-shadow: 0 1px 4px rgba(0, 0, 0, .3); font: 15px/20px Roboto, sans-serif; color: #5b5b5b; }
.place-info { display: flex; flex-direction: column; }
.place-info strong { font-size: 17px; font-weight: 500; color: #000; margin-bottom: 7px; }
.place-info a { margin-top: 24px; color: #1a73e8; }
.place-dir { display: flex; flex-direction: column; align-items: center; gap: 5px; padding-top: 3px; color: #1a73e8; height: 60px; }

/* devtools */
.devtools { display: flex; flex-direction: column; border-top: 1px solid #d3e3fd; background: #fff; overflow: hidden; }
.dt-tabs { flex: none; display: flex; align-items: center; height: 34px; background: #ecf0f9; border-bottom: 1px solid #d3e3fd; font-weight: 600; }
.dt-tabs > button { height: 33px; padding: 6px 13px 0; border-bottom: 4px solid transparent; white-space: nowrap; }
.dt-tabs > .on { color: #0b57d0; border-bottom-color: #0b57d0; border-radius: 3px 3px 0 0; }
.dt-tabs > .lighthouse { margin-left: 12px; }
.dt-tabs > .dt-inspect { padding: 2px 8px 0 11px; }
.dt-tabs > .dt-device { padding: 2px 12px 0 7px; }
.dt-tabs > .vsep + button { margin-left: 2px; }
.dt-tabs > .ico { width: 34px; padding: 4px 0 0; }
.dt-tabs > .ico:last-child { margin-right: 7px; }
.dt-tabs > .vsep + .ico { margin-left: 6px; }
.lh-bar { flex: none; display: flex; align-items: center; height: 33px; padding-left: 12px; border-bottom: 1px solid #d3e3fd; }
.lh-bar .vsep { margin: 0 15px; }
.lh-bar select { appearance: none; }
.caret { margin: 0 15px 0 9px; }
.lh-url { flex: none; display: flex; align-items: center; gap: 15px; height: 40px; padding: 0 20px 0 15px; border-bottom: 1px solid #dadce0; color: #212121; }
.lh-url button { margin-left: auto; color: #616161; }
.lh-body { flex: 298 1 0; min-height: 0; display: flex; overflow: hidden; }
.report { flex: 1; display: flex; flex-direction: column; align-items: center; min-width: 0; height: 100%; overflow: hidden; padding-top: 43px; }
.gauge { flex: none; display: flex; align-items: center; justify-content: center; gap: 14px; width: 135px; height: 54px; border-radius: 27px; background: #e6f9ee; font-size: 26px; color: #080; }
.gauge i { width: 19px; height: 19px; border-radius: 10px; background: #0c6; }
.report h2 { margin: 35px 0 28px; font-size: 25px; line-height: 36px; font-weight: 600; color: #212121; }
.clump { flex: none; display: flex; justify-content: space-between; width: 46%; min-width: 400px; height: 45px; padding-top: 6px; margin-bottom: 36px; border-bottom: 1px solid #ebebeb; font-size: 15px; line-height: 22px; color: #757575; }
.clump b { font-weight: 600; color: #616161; }
.clump button { height: 22px; font-size: 14px; color: #616161; }
.dt-tabs.drawer { height: 35px; border-top: 1px solid #d3e3fd; }
.drawer button svg { margin-left: 4px; }
.drawer > .drawer-more { padding: 2px 5px 0 6px; }
.drawer > .ai svg { margin-left: 6px; }
.drawer > .issues { margin-left: 14px; }
.drawer-body { flex: 43 1 0; min-height: 0; display: flex; background: #ebf1fd; overflow: hidden; }
.whats-new { flex: 1; display: flex; align-items: flex-start; gap: 13px; padding: 20px 0 0 calc(32% + 2px); font-size: 19px; font-weight: 600; line-height: 42px; color: #1f1f1f; }
.scrollbar.mini { padding: 7px 0; }
.mini .bar { width: 12px; height: 1px; margin-top: 8px; background: #8b8b8b; }

/* taskbar */
.taskbar { display: flex; height: 50px; color: #fff; background: linear-gradient(90deg, #30261a 0, #2e241b 3%, #241b1a 22%, #2d1a1a 30%, #2a1b1a 42%, #3a2c22 49%, #2c1b1a 54%, #2a1a1a 68%, #201c1c 75%, #3a1717 84%, #421919 91%, #33201a 96%, #2a2418 100%); }
.start { width: 60px; }
.search { width: 360px; display: flex; align-items: center; padding: 0 4px 0 14px; background: #f2f2f2; border: 1px solid #c2c2c2; color: #222; overflow: hidden; }
.search input { flex: 1; min-width: 0; margin-left: 13px; font-size: 18px; height: 30px; }
.search input::placeholder { color: #222; opacity: 1; }
.apps-row { display: flex; flex: 1; }
.apps-row button { position: relative; width: 62px; }
.apps-row button:first-child { width: 63px; padding-right: 2px; }
.run::after { content: ""; position: absolute; left: 6px; right: 6px; bottom: 0; height: 3px; background: #76b9ed; }
.focus { background: rgba(255, 255, 255, .2); }
.focus::after { left: 0; right: 0; }
.badge { position: absolute; left: 33px; top: 25px; width: 20px; height: 20px; border: 1px solid #aaa; border-radius: 10px; background: #2c2c2c; font-size: 14px; font-weight: 600; line-height: 18px; text-align: center; }
.pc { font: bold 11px "Open Sans", sans-serif; fill: #fff; }
.tm { font: bold 12px "Open Sans", sans-serif; fill: #fff; }
.weather { gap: 12px; margin-right: 24px; font-size: 17px; }
.w-icon { position: relative; }
.w-badge { position: absolute; right: 0; top: -6px; width: 15px; height: 15px; border-radius: 8px; background: #c42b1c; font-size: 11px; line-height: 15px; text-align: center; }
.tray { display: flex; }
.tray button { width: 30px; }
.tray .clock { width: 84px; line-height: 24px; }
.tray .notif { position: relative; width: 50px; }
.notif .badge { left: 24px; }
.peek { width: 1px; margin: 0 5px 0 10px; background: #6a5a50; }

/* overlays */
.watermark { position: absolute; right: 87px; bottom: 99px; color: #bebebe; font-size: 17px; pointer-events: none; }
.watermark p { margin: 0; line-height: 24px; }
.watermark p:first-child { font-size: 24px; line-height: 34px; }
.recorder { position: absolute; right: 8px; bottom: 131px; width: 24px; height: 113px; display: flex; flex-direction: column; align-items: center; gap: 6px; padding-top: 4px; overflow: hidden; border-radius: 4px; background: #181818; color: #fff; }
.recorder span { writing-mode: vertical-rl; font-size: 17px; line-height: 22px; white-space: nowrap; }
```
